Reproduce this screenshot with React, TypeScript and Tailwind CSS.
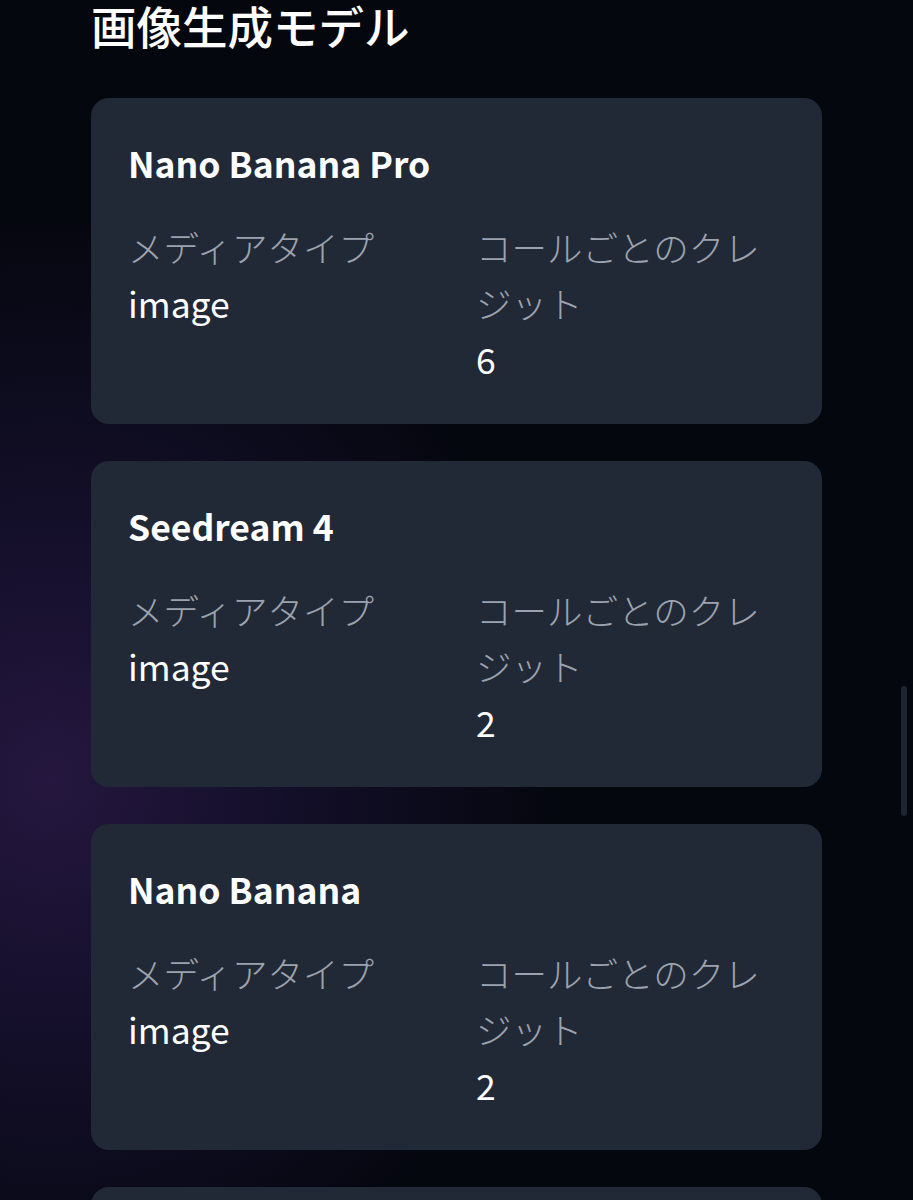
import React from 'react';

interface Model {
  name: string;
  mediaType: string;
  credits: number;
}

const models: Model[] = [
  { name: 'Nano Banana Pro', mediaType: 'image', credits: 6 },
  { name: 'Seedream 4', mediaType: 'image', credits: 2 },
  { name: 'Nano Banana', mediaType: 'image', credits: 2 },
  { name: 'Flux Kontext', mediaType: 'image', credits: 2 },
];

function ModelCard({ model }: { model: Model }) {
  return (
    <div className="rounded-[18px] bg-[#222936] pl-[37px] pr-[37px] pt-[38px] pb-[37px]">
      <h3 className="text-[35.5px] leading-[54px] font-bold text-white">{model.name}</h3>
      <div className="mt-[29px] grid grid-cols-2 gap-x-[39px] text-[35.5px] leading-[56px]">
        <div>
          <div className="font-light text-[#9ca3af]">メディアタイプ</div>
          <div className="text-white">{model.mediaType}</div>
        </div>
        <div>
          <div className="font-light text-[#9ca3af]">コールごとのクレジット</div>
          <div className="text-white">{model.credits}</div>
        </div>
      </div>
    </div>
  );
}

export default function App() {
  return (
    <div
      className="relative h-[1200px] w-full overflow-hidden bg-[#05070f] bg-[radial-gradient(ellipse_500px_560px_at_50px_780px,#25173f_0%,#140f2a_45%,#05070f_100%)]"
      style={{ fontFamily: '"Noto Sans CJK JP", "Noto Sans", sans-serif' }}
    >
      <div className="px-[91px]">
        <h2 className="-mt-[3px] text-[45.5px] leading-[56px] font-medium text-white">画像生成モデル</h2>
        <div className="mt-[45px] flex flex-col gap-[37px]">
          {models.map((m) => (
            <ModelCard key={m.name} model={m} />
          ))}
        </div>
      </div>
      {/* scrollbar */}
      <div className="absolute right-[6px] top-[686px] h-[130px] w-[6px] rounded-full bg-[#1e2431]" />
    </div>
  );
}
